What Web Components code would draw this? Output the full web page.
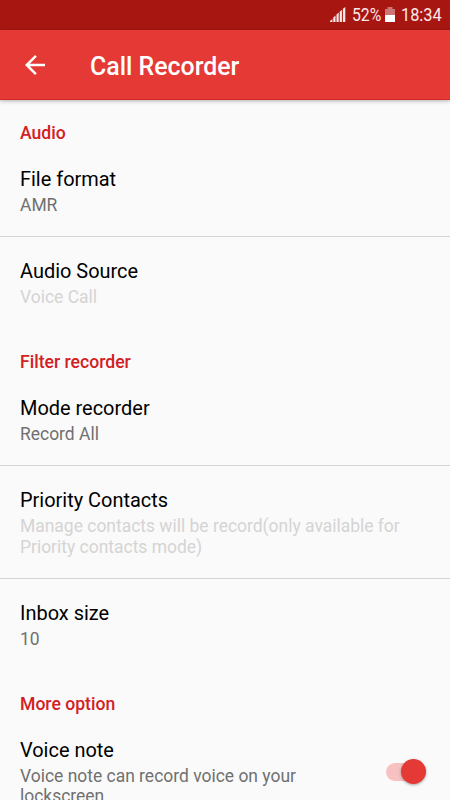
<!DOCTYPE html>
<html lang="en">
<head>
<meta charset="utf-8">
<title>Call Recorder</title>
<style>
  body {
    margin: 0;
    height: 800px;
    overflow: hidden;
    background: #fafafa;
    font-family: Roboto, sans-serif;
  }
</style>
</head>
<body>
<settings-screen></settings-screen>

<script>
class StatusBar extends HTMLElement {
  constructor() {
    super();
    this.shadowDOM = this.attachShadow({ mode: 'open' });
  }

  connectedCallback() {
    this.render();
  }

  render() {
    this.shadowDOM.innerHTML = `
      <style>
        :host {
          display: flex;
          align-items: center;
          justify-content: flex-end;
          box-sizing: border-box;
          height: 30px;
          padding-right: 8px;
          background: #a81611;
          color: #fbe9e8;
          font-size: 19px;
          line-height: 29px;
        }
        svg { display: block; fill: #fbe9e8; }
        .signal { margin-right: 6px; }
        .battery { margin: 0 6px 0 4px; }
        .text { display: block; height: 30px; white-space: nowrap; }
        .percent { width: 29px; }
        .clock { width: 41px; }
        .text span { display: inline-block; transform: scaleX(.83); transform-origin: left; }
        .clock span { transform: scaleX(.86); }
      </style>
      <svg class="signal" width="16" height="16" viewBox="0 0 16 16">
        <path d="M0 15v-1l2.4-2v3zM3.3 15v-4.5l2.2-2V15zM6.5 15V7.6l2.2-2V15zM9.7 15V4.7l2.2-2V15zM12.9 15V1.8L15.3 0v15z"/>
      </svg>
      <div class="text percent"><span>${this.getAttribute('battery')}</span></div>
      <svg class="battery" width="10" height="16" viewBox="0 0 10 16">
        <path d="M2.5 0h5v2H10v6H0V2h2.5z" opacity=".45"/>
        <path d="M0 8h10v7H0z" fill="#fff"/>
      </svg>
      <div class="text clock"><span>${this.getAttribute('time')}</span></div>
    `;
  }
}
customElements.define('status-bar', StatusBar);

class AppBar extends HTMLElement {
  constructor() {
    super();
    this.shadowDOM = this.attachShadow({ mode: 'open' });
  }

  connectedCallback() {
    this.render();
  }

  render() {
    this.shadowDOM.innerHTML = `
      <style>
        :host {
          display: flex;
          align-items: center;
          box-sizing: border-box;
          height: 70px;
          padding-left: 20px;
          border-bottom: 1px solid #d02a2a;
          background: #e53935;
          color: #fff;
          box-shadow: 0 1px 4px rgba(0, 0, 0, .3);
        }
        svg { display: block; margin-right: 40px; fill: #fff; }
        h1 { margin: 5px 0 0; font-size: 24.9px; font-weight: 500; line-height: 30px; }
      </style>
      <svg width="30" height="30" viewBox="0 0 24 24">
        <path d="M20 11H7.83l5.59-5.59L12 4l-8 8 8 8 1.41-1.41L7.83 13H20v-2z"/>
      </svg>
      <h1><slot></slot></h1>
    `;
  }
}
customElements.define('app-bar', AppBar);

class PreferenceGroup extends HTMLElement {
  constructor() {
    super();
    this.shadowDOM = this.attachShadow({ mode: 'open' });
  }

  connectedCallback() {
    this.render();
  }

  render() {
    this.shadowDOM.innerHTML = `
      <style>
        :host { display: block; padding-top: 24px; }
        :host(:first-of-type) { padding-top: 23px; }
        h2 {
          margin: 0;
          padding: 0 20px 2px;
          color: #d32023;
          font-size: 17.6px;
          font-weight: 500;
          line-height: 20px;
        }
      </style>
      <h2>${this.getAttribute('heading')}</h2>
      <slot></slot>
    `;
  }
}
customElements.define('preference-group', PreferenceGroup);

class PreferenceItem extends HTMLElement {
  constructor() {
    super();
    this.shadowDOM = this.attachShadow({ mode: 'open' });
  }

  connectedCallback() {
    this.render();
  }

  render() {
    this.shadowDOM.innerHTML = `
      <style>
        :host {
          display: flex;
          align-items: center;
          justify-content: space-between;
          padding: 21px 20px 20px;
        }
        :host([divider]) { border-bottom: 1px solid #d4d4d4; }
        .title { color: #000; font-size: 19.95px; line-height: 26px; }
        .summary { color: #707070; font-size: 17.47px; line-height: 20.5px; margin-top: 3px; padding-bottom: .5px; }
        :host([disabled]) .summary { color: #d4d4d4; }
      </style>
      <div class="content">
        <div class="title">${this.getAttribute('label')}</div>
        <div class="summary"><slot></slot></div>
      </div>
      <slot name="widget"></slot>
    `;
  }
}
customElements.define('preference-item', PreferenceItem);

class ToggleSwitch extends HTMLElement {
  constructor() {
    super();
    this.shadowDOM = this.attachShadow({ mode: 'open' });
  }

  connectedCallback() {
    this.render();
  }

  render() {
    this.shadowDOM.innerHTML = `
      <style>
        :host {
          display: flex;
          align-items: center;
          justify-content: flex-end;
          flex: none;
          width: 40px;
          height: 18px;
          margin-right: 4px;
          border-radius: 9px;
          background: #f8c1c1;
        }
        .thumb {
          flex: none;
          width: 25px;
          height: 25px;
          border-radius: 50%;
          background: #e53935;
          box-shadow: 0 1px 3px rgba(0, 0, 0, .35);
        }
      </style>
      <div class="thumb"></div>
    `;
  }
}
customElements.define('toggle-switch', ToggleSwitch);

class SettingsScreen extends HTMLElement {
  constructor() {
    super();
    this.shadowDOM = this.attachShadow({ mode: 'open' });
  }

  connectedCallback() {
    this.render();
  }

  render() {
    // the last row runs past the bottom edge, as in a scrolled list
    this.shadowDOM.innerHTML = `
      <style>
        :host { display: block; height: 800px; overflow: hidden; }
      </style>
      <status-bar battery="52%" time="18:34"></status-bar>
      <app-bar>Call Recorder</app-bar>
      <preference-group heading="Audio">
        <preference-item label="File format" divider>AMR</preference-item>
        <preference-item label="Audio Source" disabled>Voice Call</preference-item>
      </preference-group>
      <preference-group heading="Filter recorder">
        <preference-item label="Mode recorder" divider>Record All</preference-item>
        <preference-item label="Priority Contacts" disabled divider>Manage contacts will be record(only available for<br>Priority contacts mode)</preference-item>
        <preference-item label="Inbox size">10</preference-item>
      </preference-group>
      <preference-group heading="More option">
        <preference-item label="Voice note">Voice note can record voice on your<br>lockscreen<toggle-switch slot="widget"></toggle-switch></preference-item>
      </preference-group>
    `;
  }
}
customElements.define('settings-screen', SettingsScreen);
</script>
</body>
</html>
